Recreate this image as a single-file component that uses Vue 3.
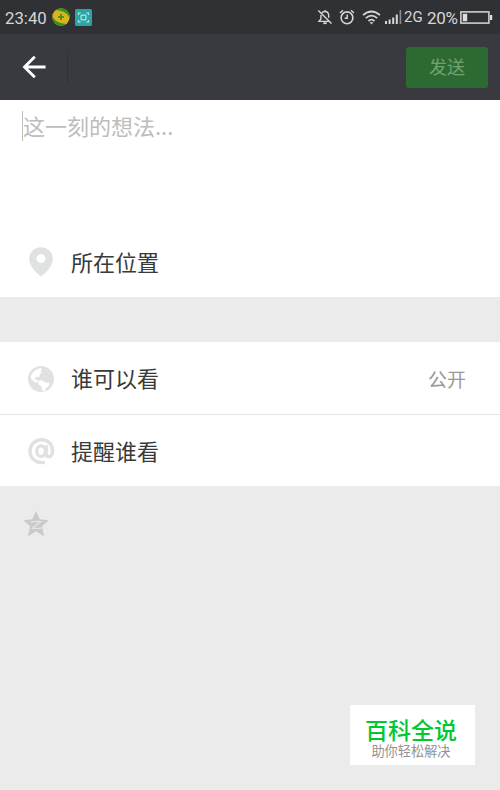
<template>
  <div class="page">
    <div class="status-bar">
      <span class="time">23:40</span>
      <svg class="app-badge" width="18" height="18" viewBox="0 0 18 18">
        <circle cx="9" cy="9" r="8.7" fill="#d9b41c" />
        <path d="M4 1.9A8.7 8.7 0 0 1 17.7 9.5Q15.5 5.5 12 4Q8.5 2.3 4 1.9Z" fill="#30921f" />
        <path d="M.3 8.5A8.7 8.7 0 0 0 14 16.1Q9.5 15.7 6 14Q2.5 12.5 .3 8.5Z" fill="#30921f" />
        <path d="M9 6v6M6 9h6" stroke="#43851d" stroke-width="1.6" />
      </svg>
      <svg class="scan-badge" width="17" height="17" viewBox="0 0 17 17">
        <rect width="17" height="17" rx="1.5" fill="#27a5a7" />
        <g fill="none" stroke="#b9e5e5" stroke-width="1.2">
          <path d="M3.5 6V4h2.3M11.2 4h2.3v2M13.5 11v2h-2.3M5.8 13H3.5v-2" />
          <rect x="6" y="6.2" width="5" height="4.6" rx="1" />
        </g>
      </svg>

      <div class="status-right">
        <svg class="bell" width="16" height="16" viewBox="0 0 16 16" fill="none" stroke="#d6d6d8" stroke-width="1.4">
          <path d="M4.8 4.2C5.5 3 6.5 2.5 8 2.5c2.5 0 3.7 1.8 3.7 4.2v2M3.9 6v4L2 12.4h9.8M8 1v1.5M1.3 1.5l13.2 13" />
          <path d="M6.3 14.2h3.4" stroke-width="1.8" />
        </svg>
        <svg class="alarm" width="16" height="16" viewBox="0 0 16 16" fill="none" stroke="#d6d6d8" stroke-width="1.6">
          <circle cx="8" cy="8.8" r="5.9" />
          <path d="M8.2 5.5v3.7H5.6M1 4l3-2.7M15 4l-3-2.7" stroke-width="1.5" />
        </svg>
        <svg class="wifi" width="19" height="15" viewBox="0 0 19 15" fill="none" stroke="#d6d6d8" stroke-width="1.7">
          <path d="M1 5.2q8.5-7.4 17 0M3.8 8.2q5.7-5 11.4 0M6.5 11q3-2.6 6 0" />
          <path d="M7.5 12.2h4L9.5 14.5z" fill="#d6d6d8" stroke="none" />
        </svg>
        <svg class="signal" width="17" height="15" viewBox="0 0 17 15">
          <path d="M0 11h2v3H0zM3.6 9.5h2V14h-2zM7.2 7.5h2V14h-2zM10.8 4.5h2V14h-2z" fill="#d6d6d8" />
          <path d="M14.6 0h1.6v14h-1.6z" fill="#8b8c8f" />
        </svg>
        <span class="network">2G</span>
        <span class="percent">20%</span>
        <svg class="battery" width="33" height="13" viewBox="0 0 33 13">
          <rect x=".9" y=".9" width="28" height="11.2" fill="none" stroke="#d0d0d2" stroke-width="1.6" />
          <path d="M2.8 2.8h4.4v7.4H2.8zM30 4h2.2v5H30z" fill="#dededf" />
        </svg>
      </div>
    </div>

    <header class="nav-bar">
      <svg class="back" width="24" height="24" viewBox="0 0 24 24" fill="none" stroke="#fff" stroke-width="2.8">
        <path d="M23.5 12H2.5M12.8 1.8L2.5 12l10.3 10.2" />
      </svg>
      <span class="nav-divider"></span>
      <button type="button" class="send-button">发送</button>
    </header>

    <section class="composer">
      <div class="editor">
        <span class="caret"></span>
        <span class="placeholder">这一刻的想法...</span>
      </div>
      <div class="row location">
        <svg class="row-icon" width="28" height="30" viewBox="0 0 28 30">
          <path fill="#dfe2e1" fill-rule="evenodd" d="M14 .3C7.3 .3 2.2 5.3 2.2 11.8c0 7.5 6.3 13.3 11.8 17.8 5.5-4.5 11.8-10.3 11.8-17.8C25.8 5.3 20.7.3 14 .3ZM14 7.1a4.5 4.5 0 1 1 0 9 4.5 4.5 0 0 1 0-9Z" />
        </svg>
        <span class="row-label">所在位置</span>
      </div>
    </section>

    <section class="options">
      <div class="row option">
        <svg class="row-icon" width="28" height="28" viewBox="0 0 28 28">
          <circle cx="14" cy="14" r="13" fill="#dfe2e1" />
          <path fill="#fff" d="M13.5 2.8L7.2 5.8 3.8 11l.4 3.2 1.6.8 1.5 2.2 2.8.2 1.2-1.9-2.8-.8-.7-1.7 2.2-1.2 2.3.2.2-2.1 2.1-2.4-1.1-2.1 1.6-.8Z" />
          <path fill="#fff" d="M11 16.1l4-.9 3 2.1 4.5.8-.9 3.2-2.4 1.7-1.7 3-2.3-.3-.7-4.1-3-2.2Z" />
        </svg>
        <span class="row-label">谁可以看</span>
        <span class="row-value">公开</span>
      </div>
      <div class="row option">
        <svg class="row-icon" width="28" height="28" viewBox="0 0 28 28" fill="none" stroke="#dfe2e1" stroke-width="3.4">
          <path d="M17.8 25.3C9.5 27 3 21.5 3 14.2 3 7.5 8.2 2.7 14.5 2.7c6.4 0 11 4.4 11 10.5 0 4.4-1.5 6.6-3.7 6.6-1.8 0-2.4-1.2-2.4-3V8.2" />
          <ellipse cx="14" cy="14.2" rx="4.2" ry="5.3" stroke-width="3.2" />
        </svg>
        <span class="row-label">提醒谁看</span>
      </div>
    </section>

    <div class="share">
      <svg width="26" height="26" viewBox="0 0 26 26">
        <path fill="#cacaca" d="M13 0l3.7 8.3 9.1.9-6.8 6.1 2.1 10.2L13 20.3l-8.1 5.2L7 15.3.2 9.2l9.1-.9Z" />
        <path d="M7.8 10.8q5-.8 9.9-.2L9.5 17.2q5 .8 9.3-.4" fill="none" stroke="#e6e6e6" stroke-width="1.2" />
      </svg>
    </div>

    <div class="watermark">
      <strong>百科全说</strong>
      <span>助你轻松解决</span>
    </div>
  </div>
</template>

<script setup>
</script>

<style>
body {
  background: #ebebeb;
}
</style>

<style scoped>
.page {
  position: relative;
  width: 500px;
  height: 790px;
  overflow: hidden;
  background: #ebebeb;
  font-family: "Noto Sans CJK SC", sans-serif;
}

.status-bar {
  display: flex;
  align-items: center;
  box-sizing: border-box;
  height: 34px;
  padding: 0 7px 0 5px;
  background: #303135;
  color: #d6d6d8;
  font-family: Roboto, sans-serif;
}

.time {
  width: 47px;
  font-size: 16.8px;
  line-height: 34px;
  padding-top: 1px;
}

.scan-badge {
  margin-left: 5px;
}

.status-right {
  display: flex;
  align-items: center;
  margin-left: auto;
}

.alarm {
  margin-left: 6px;
}

.wifi {
  margin-left: 7px;
}

.signal {
  margin-left: 4px;
}

.network {
  width: 23px;
  margin-left: 2px;
  font-size: 15px;
}

.percent {
  width: 33px;
  font-size: 17px;
  letter-spacing: -0.3px;
  padding-top: 1px;
}

.nav-bar {
  display: flex;
  align-items: center;
  box-sizing: border-box;
  height: 66px;
  padding: 0 12px 0 22px;
  background: #393a3f;
}

.nav-divider {
  width: 1px;
  height: 34px;
  margin-left: 21px;
  background: #313236;
}

.send-button {
  width: 82px;
  height: 41px;
  margin-left: auto;
  padding: 0 0 2px;
  border: none;
  border-radius: 3px;
  background: #2d6a31;
  color: #72a174;
  font-family: inherit;
  font-size: 18px;
}

.composer {
  height: 197px;
  background: #fff;
}

.editor {
  display: flex;
  align-items: flex-start;
  box-sizing: border-box;
  height: 126px;
  padding: 11px 22px 0;
}

.caret {
  width: 1px;
  height: 30px;
  background: #bdbdbd;
}

.placeholder {
  color: #bcbcbc;
  font-size: 22px;
  line-height: 28px;
}

.row {
  display: flex;
  align-items: center;
  box-sizing: border-box;
  height: 72px;
  padding: 0 34px 0 27px;
}

.row-icon {
  flex-shrink: 0;
}

.row-label {
  margin-left: 16px;
  padding-bottom: 2px;
  color: #393939;
  font-size: 22px;
  line-height: 32px;
}

.row-value {
  margin-left: auto;
  padding-bottom: 1px;
  color: #999;
  font-size: 19px;
}

.options {
  margin-top: 45px;
  padding-top: 1px;
  background: #fff;
}

.option:first-child {
  height: 71px;
}

.option:first-child .row-label {
  padding-bottom: 3px;
}

.option + .option {
  border-top: 1px solid #e5e5e5;
}

.share {
  padding: 25px 23px;
}

.watermark {
  position: absolute;
  left: 350px;
  top: 705px;
  display: flex;
  flex-direction: column;
  align-items: center;
  box-sizing: border-box;
  width: 125px;
  height: 60px;
  padding: 7px 3px 0 0;
  background: #fff;
}

.watermark strong {
  color: #00c832;
  font-size: 23px;
  font-weight: 500;
  line-height: 34px;
}

.watermark span {
  color: #929292;
  font-size: 13.2px;
  line-height: 10px;
}
</style>
